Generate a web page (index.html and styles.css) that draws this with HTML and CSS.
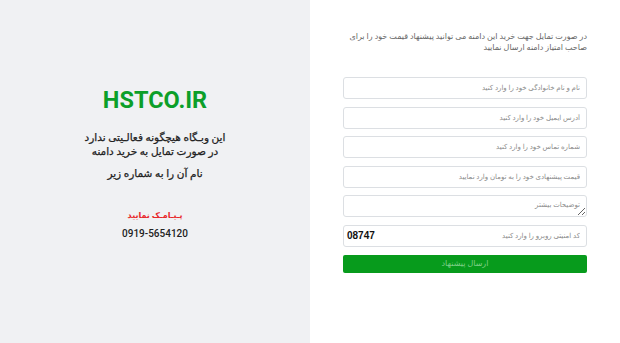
FILE: index.html
```html
<!DOCTYPE html>
<html lang="fa" dir="rtl">
<head>
  <meta charset="UTF-8">
  <meta name="viewport" content="width=device-width, initial-scale=1.0">
  <title>HSTCO.IR</title>
  <link rel="stylesheet" href="styles.css">
</head>
<body>
  <div class="page">
    <!-- Offer form -->
    <section class="offer">
      <p class="intro">در صورت تمایل جهت خرید این دامنه می توانید پیشنهاد قیمت خود را برای صاحب امتیاز دامنه ارسال نمایید</p>

      <form class="offer-form">
        <input type="text" class="field" placeholder="نام و نام خانوادگی خود را وارد کنید">
        <input type="text" class="field" placeholder="آدرس ایمیل خود را وارد کنید">
        <input type="text" class="field" placeholder="شماره تماس خود را وارد کنید">
        <input type="text" class="field" placeholder="قیمت پیشنهادی خود را به تومان وارد نمایید">
        <textarea class="field field-area" dir="ltr" placeholder="توضیحات بیشتر"></textarea>
        <div class="field captcha">
          <input type="text" placeholder="کد امنیتی روبرو را وارد کنید">
          <span class="captcha-code">08747</span>
        </div>
        <button type="button" class="send-btn" disabled>ارسال پیشنهاد</button>
      </form>
    </section>

    <!-- Domain info -->
    <section class="info">
      <h1 class="domain">HSTCO.IR</h1>
      <p class="lead">این وبـگاه هیچگونه فعالـیتی ندارد<br>در صورت تمایل به خرید دامنه</p>
      <p class="lead">نام آن را به شماره زیر</p>
      <p class="sms">پـیـامـک نمایید</p>
      <p class="phone">0919-5654120</p>
    </section>
  </div>
</body>
</html>
```

FILE: styles.css
```css
/* Basic Styles */
body {
  font-family: Roboto, "DejaVu Sans", sans-serif;
  margin: 0;
  padding: 0;
  background: #fff;
  color: #333;
}

.page {
  display: flex;
  height: 343px;
}

/* Right column: form */
.offer {
  width: 310px;
  padding: 31px 33px 0 33px;
  box-sizing: border-box;
  background: #fff;
}

.intro {
  margin: 0 0 24px 0;
  font-size: 8px;
  line-height: 11px;
  color: #666;
}

.offer-form {
  display: flex;
  flex-direction: column;
  gap: 7.5px;
}

.field {
  box-sizing: border-box;
  width: 100%;
  height: 22px;
  padding: 0 6px;
  border: 1px solid #dcdfe3;
  border-radius: 3px;
  background: #fff;
  font-family: inherit;
  font-size: 7px;
  color: #555;
  outline: none;
}

.field::placeholder,
.captcha input::placeholder {
  color: #8a8a8a;
}

.field-area {
  padding-top: 5px;
  text-align: right;
  resize: vertical;
}

.captcha {
  display: flex;
  align-items: center;
  padding: 0 4px 0 0;
}

.captcha input {
  flex: 1;
  min-width: 0;
  height: 100%;
  border: none;
  outline: none;
  padding: 0 2px;
  font-family: inherit;
  font-size: 7px;
  background: transparent;
}

.captcha-code {
  font-family: "Liberation Sans", Arial, sans-serif;
  font-weight: bold;
  font-size: 10px;
  color: #111;
  direction: ltr;
  padding-left: 3px;
}

.send-btn {
  height: 18px;
  border: none;
  border-radius: 2px;
  background: #079b1c;
  color: #7fcf89;
  font-family: inherit;
  font-size: 8px;
  margin-top: 0.5px;
}

/* Left column: domain info */
.info {
  width: 310px;
  background: #f0f1f3;
  text-align: center;
  padding-top: 85px;
  box-sizing: border-box;
}

.domain {
  margin: 0;
  font-size: 23.5px;
  line-height: 30px;
  font-weight: bold;
  color: #0c9f29;
}

.lead {
  margin: 16px 0 0 0;
  font-size: 10.5px;
  line-height: 14px;
  font-weight: normal;
  color: #222;
  -webkit-text-stroke: 0.25px #222;
}

.lead + .lead {
  margin-top: 8px;
}

.sms {
  margin: 30px 0 0 0;
  font-size: 8px;
  font-weight: bold;
  color: #e8282a;
}

.phone {
  margin: 8px 0 0 0;
  font-size: 10px;
  font-weight: 500;
  color: #222;
  direction: ltr;
}
```
